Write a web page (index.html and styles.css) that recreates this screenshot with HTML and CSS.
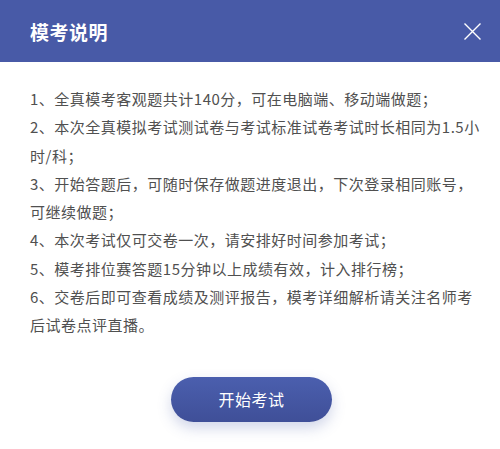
FILE: index.html
```html
<!DOCTYPE html>
<html lang="zh">
<head>
<meta charset="utf-8">
<link rel="stylesheet" href="styles.css">
</head>
<body>
<div class="dialog">
  <div class="header">
    <span class="title">模考说明</span>
    <svg class="close" width="17" height="17" viewBox="0 0 17 17"><path d="M0.5 0.5L16.5 16.5M16.5 0.5L0.5 16.5" stroke="#fff" stroke-width="1.4" fill="none"/></svg>
  </div>
  <div class="body">
    <p>1、全真模考客观题共计140分，可在电脑端、移动端做题；</p>
    <p>2、本次全真模拟考试测试卷与考试标准试卷考试时长相同为1.5小时/科；</p>
    <p>3、开始答题后，可随时保存做题进度退出，下次登录相同账号，可继续做题；</p>
    <p>4、本次考试仅可交卷一次，请安排好时间参加考试；</p>
    <p>5、模考排位赛答题15分钟以上成绩有效，计入排行榜；</p>
    <p>6、交卷后即可查看成绩及测评报告，模考详细解析请关注名师考后试卷点评直播。</p>
  </div>
  <div class="footer">
    <button class="start">开始考试</button>
  </div>
</div>
</body>
</html>
```
FILE: styles.css
```css
* { box-sizing: border-box; }
html, body { margin: 0; padding: 0; background: #fff; }
body { font-family: "Noto Sans CJK SC", "Noto Sans", sans-serif; }
.dialog { width: 500px; height: 449px; background: #fff; }
.header {
  height: 62px;
  background: #485aa7;
  display: flex;
  align-items: center;
  justify-content: space-between;
  padding: 0 19px 0 30px;
}
.title { color: #fff; font-size: 19px; font-weight: bold; letter-spacing: 0.5px; }
.close { display: block; }
.body { padding: 23px 16px 0 30px; }
.body p {
  margin: 0;
  font-size: 15px;
  letter-spacing: 0.5px;
  line-height: 28.3px;
  color: #505050;
}
.footer { display: flex; justify-content: center; padding-top: 37px; }
.start {
  width: 161px;
  height: 45px;
  border: none;
  border-radius: 23px;
  background: linear-gradient(#4b5fae, #3f4f98);
  color: #fff;
  font-family: inherit;
  font-size: 16px;
  letter-spacing: 0.5px;
  box-shadow: 0 6px 14px rgba(72, 90, 167, 0.25);
  margin-left: 3px;
}
```
